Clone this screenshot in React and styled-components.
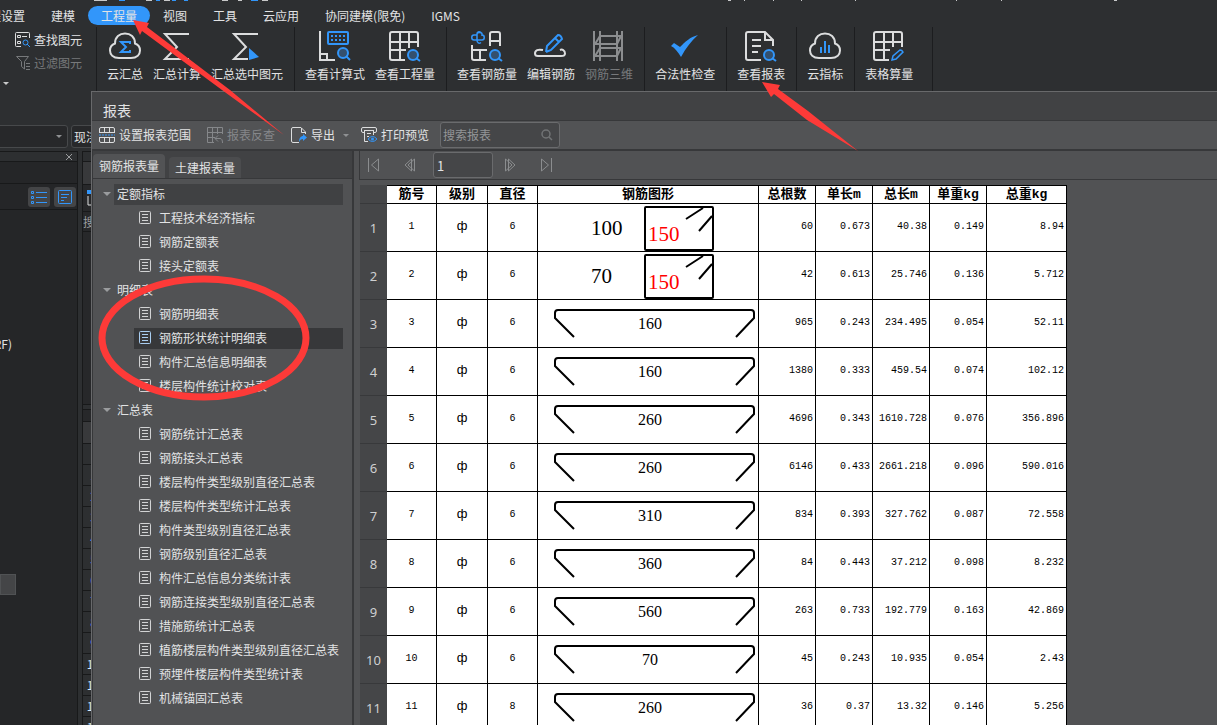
import React from "react";
import styled, { createGlobalStyle, css } from "styled-components";

const UI_FONT = '"Noto Sans CJK SC", "Noto Sans", sans-serif';
const LINE = "#18191a";
const BLUE = "#3296fa";
const RED = "#fd3a38";

const GlobalStyle = createGlobalStyle`
  *, *::before, *::after { box-sizing: border-box; }
  body { margin: 0; background: #2d2f31; }
  button, input { font: inherit; color: inherit; }
  button { background: none; border: 0; padding: 0; }
`;

const Page = styled.div`
  position: relative;
  display: flex;
  flex-direction: column;
  height: 100vh;
  overflow: hidden;
  background: #2d2f31;
  color: #e2e3e4;
  font-family: ${UI_FONT};
  font-size: 12px;
  line-height: 18px;
  white-space: nowrap;
`;

const QuickStrip = styled.div`
  height: 6px;
  flex: none;
  svg { display: block; }
`;

const MenuBar = styled.nav`
  display: flex;
  flex: none;
  height: 21px;
  margin-left: -36px;
`;

const MenuItem = styled.button`
  height: 19px;
  padding: 0 13px;
  border-radius: 10px;
  line-height: 18px;
  background: ${(p) => (p.$active ? BLUE : "transparent")};
`;

const Ribbon = styled.div`
  display: flex;
  flex: none;
  height: 64px;
`;

const RibbonGroup = styled.div`
  display: flex;
  gap: 10px;
  padding: 0 ${(p) => (p.$wide ? 19 : 11)}px 0 10px;
  border-right: 1px solid #1c1d1f;
`;

const RibbonButton = styled.button`
  display: flex;
  flex-direction: column;
  align-items: center;
  gap: 3px;
  padding-top: 3px;
  line-height: 18px;
  color: ${(p) => (p.disabled ? "#77797b" : "#e2e3e4")};
  svg { display: block; margin-right: 2px; overflow: visible; }
`;

const FindGroup = styled.div`
  display: flex;
  flex-direction: column;
  width: 97px;
  padding: 3px 0 0 15px;
  gap: 4px;
  border-right: 1px solid #1c1d1f;
`;

const FindButton = styled.button`
  display: flex;
  align-items: center;
  gap: 3px;
  height: 19px;
  color: ${(p) => (p.disabled ? "#77797b" : "#e2e3e4")};
`;

const MoreButton = styled.button`
  display: flex;
  align-items: center;
  height: 14px;
  margin-left: -12px;
`;

const Caret = styled.span`
  flex: none;
  width: 0;
  height: 0;
  border: ${(p) => p.$size || 3}px solid transparent;
  border-bottom: 0;
  border-top-color: ${(p) => p.$color || "#8f9193"};
`;

const Workspace = styled.div`
  display: flex;
  flex: 1;
  min-height: 0;
`;

const Backdrop = styled.div`
  display: flex;
  flex-direction: column;
  flex: none;
  width: 91px;
  overflow: hidden;
`;

const SelectorRow = styled.div`
  display: flex;
  flex: none;
  gap: 3px;
  height: 60px;
  padding-top: 34px;
`;

const Selector = styled.button`
  display: flex;
  flex: none;
  align-items: center;
  justify-content: ${(p) => (p.$end ? "flex-end" : "flex-start")};
  width: ${(p) => (p.$end ? 74 : 60)}px;
  height: 23px;
  margin-left: ${(p) => (p.$end ? -6 : 0)}px;
  padding: 0 5px 0 2px;
  background: #27282a;
  border: 1px solid #47494b;
  border-radius: 3px;
`;

const BackPanels = styled.div`
  display: flex;
  flex: 1;
  gap: 4px;
`;

const LeftPane = styled.div`
  display: flex;
  flex-direction: column;
  width: 78px;
  flex: none;
  background: #252628;
  border: solid ${LINE};
  border-width: 1px 1px 0 0;
`;

const PaneTitle = styled.div`
  display: flex;
  justify-content: flex-end;
  align-items: center;
  height: 10px;
  padding-right: 3px;
  background: #2d2f31;
  border-bottom: 1px solid ${LINE};
`;

const PaneTools = styled.div`
  display: flex;
  justify-content: flex-end;
  align-items: center;
  gap: 4px;
  height: 27px;
  margin-top: 21px;
  padding-right: 1px;
  border: solid ${LINE};
  border-width: 1px 0;
`;

const PaneButton = styled.button`
  display: grid;
  place-items: center;
  width: 22px;
  height: 20px;
  border-radius: 3px;
  background: #444547;
`;

const FloorNode = styled.div`
  display: flex;
  justify-content: flex-end;
  width: 12px;
  margin-top: 125px;
`;

const GrayBlock = styled.div`
  width: 16px;
  height: 21px;
  margin-top: 221px;
  background: #444547;
  border: 1px solid #505254;
`;

const RightPane = styled.div`
  flex: none;
  width: 22px;
  background: #252628;
  border: solid ${LINE};
  border-width: 1px 0 0 1px;
`;

const StripCell = styled.div`
  display: flex;
  align-items: center;
  justify-content: ${(p) => p.$align || "center"};
  height: ${(p) => p.$h}px;
  background: ${(p) => p.$bg || "#27282a"};
  border-bottom: 1px solid ${LINE};
  color: ${(p) => p.$color || "#9a9c9e"};
  overflow: hidden;
`;

const Dialog = styled.section`
  display: flex;
  flex-direction: column;
  flex: 1;
  min-width: 0;
  border: solid #68696b;
  border-width: 1px 0 0 1px;
  background: #515254;
`;

const DialogTitle = styled.h1`
  flex: none;
  height: 29px;
  margin: 0;
  padding: 8px 0 0 11px;
  font-size: 14px;
  font-weight: 400;
  line-height: 21px;
  background: #414244;
  border-bottom: 1px solid #37383a;
`;

const Toolbar = styled.div`
  display: flex;
  flex: none;
  align-items: center;
  height: 30px;
  padding-left: 7px;
  background: #525355;
  border-bottom: 2px solid #37383a;
`;

const ToolButton = styled.button`
  display: flex;
  align-items: center;
  gap: 4px;
  margin-right: ${(p) => p.$after || 0}px;
  color: ${(p) => (p.disabled ? "#85878a" : "#e2e3e4")};
`;

const SearchBox = styled.label`
  display: flex;
  align-items: center;
  width: 120px;
  height: 26px;
  padding: 0 6px 0 2px;
  background: #454648;
  border: 1px solid #6a6b6d;
  border-radius: 3px;
`;

const SearchInput = styled.input`
  flex: 1;
  min-width: 0;
  padding: 0;
  border: 0;
  outline: 0;
  background: none;
  &::placeholder { color: #939597; opacity: 1; }
`;

const DialogBody = styled.div`
  display: flex;
  flex: 1;
  min-height: 0;
`;

const Sidebar = styled.aside`
  display: flex;
  flex-direction: column;
  flex: none;
  width: 262px;
  border: solid #37383a;
  border-width: 0 2px 0 1px;
`;

const TabBar = styled.div`
  display: flex;
  flex: none;
  align-items: flex-end;
  gap: 4px;
  height: 28px;
  background: #414244;
  border-bottom: 1px solid #37383a;
`;

const Tab = styled.button`
  width: 72px;
  height: ${(p) => (p.$active ? 24 : 21)}px;
  border-radius: 4px 4px 0 0;
  background: ${(p) => (p.$active ? "#525355" : "#4b4c4e")};
`;

const Tree = styled.ul`
  flex: 1;
  margin: 0;
  padding: 3px 9px 0 10px;
  list-style: none;
  overflow: hidden;
`;

const TreeRow = styled.li`
  display: flex;
  align-items: center;
  height: 24px;
  padding-left: ${(p) => (p.$leaf ? 31 : 0)}px;
`;

const TreeLabel = styled.span`
  display: flex;
  flex: 1;
  align-items: center;
  gap: 8px;
  height: 21px;
  margin-left: ${(p) => (p.$leaf ? 0 : 3)}px;
  padding-left: ${(p) => (p.$leaf ? 5 : 3)}px;
  ${(p) => p.$bg && css`background: ${p.$bg};`}
  svg { flex: none; }
`;

const Report = styled.main`
  flex: 1;
  min-width: 0;
  margin-left: 5px;
  overflow: hidden;
`;

const Pager = styled.div`
  display: flex;
  align-items: center;
  height: 29px;
  padding-left: 8px;
  border: solid #37383a;
  border-width: 0 0 1px 1px;
`;

const PagerButton = styled.button`
  display: flex;
  margin-right: ${(p) => p.$after || 0}px;
`;

const PageInput = styled.input`
  width: 60px;
  height: 26px;
  margin-right: 11px;
  padding: 0 3px;
  font-size: 13px;
  background: #454648;
  border: 1px solid #6a6b6d;
  border-radius: 3px;
`;

const Sheet = styled.table`
  width: 707px;
  margin: 5px 0 0 1px;
  table-layout: fixed;
  border-collapse: separate;
  border-spacing: 0;
  color: #000;
`;

const HeadCell = styled.th`
  height: 19px;
  padding: 0;
  font: 700 13px/16px "Liberation Mono", "Noto Sans CJK SC", monospace;
  background: #fff;
  border: solid #000;
  border-width: 1px 1px 1px 0;
`;

const RowHead = styled.th`
  padding: 0;
  font: 400 13px/18px "Noto Sans", sans-serif;
  color: #cfd0d1;
  background: #454648;
  border-bottom: 1px solid #38393b;
`;

const Cell = styled.td`
  height: 48px;
  padding: 0 ${(p) => (p.$num ? 2 : 0)}px ${(p) => (p.$draw ? 0 : 2)}px 0;
  font: 10px/16px "Liberation Mono", monospace;
  text-align: ${(p) => (p.$num ? "right" : "center")};
  background: #fff;
  border: solid #000;
  border-width: 0 1px 1px 0;
  svg { display: block; }
`;

const Grade = styled.span`
  font: 13px/16px "Liberation Sans", sans-serif;
`;

const Markup = styled.svg`
  position: absolute;
  top: 0;
  left: 0;
  pointer-events: none;
`;

const W = { fill: "none", stroke: "#dcddde", strokeWidth: 2 };
const B = { fill: "none", stroke: BLUE, strokeWidth: 2 };

const Icon = ({ w = 32, h = 32, children }) => (
  <svg width={w} height={h} viewBox={`0 0 ${w} ${h}`} aria-hidden="true">{children}</svg>
);

const CLOUD = "M11 28C5 28 2 24.500 2 20.500C2 17 4 14.500 7 13.500C7 7 11.500 3.500 17 3.500C22.500 3.500 27 7 27 13.500C30 14.500 32 17 32 20.500C32 24.500 29 28 23 28Z";

const ribbonIcons = {
  cloudSum: (
    <Icon><path d={CLOUD} {...W} /><path d="M22 14V12H13L18 17L13 22H22V20" {...B} /></Icon>
  ),
  sum: <Icon><path d="M29 4H5L17 17L5 29H29" {...W} /></Icon>,
  sumPick: (
    <Icon><path d="M28 4H4L16 17L4 29H18" {...W} /><path d="M19 18L29 27L19 30Z" fill={BLUE} /></Icon>
  ),
  formula: (
    <Icon>
      <path d="M2 1V30H17M3 24H9V30" {...W} />
      <rect x="10" y="2" width="20" height="12" rx="1" {...B} />
      <path d="M13 6H28M13 10H28" {...B} strokeDasharray="2 2" />
      <circle cx="25" cy="23" r="5" {...B} fill="#34506e" /><path d="M28 26L32 30" {...B} />
    </Icon>
  ),
  quantity: (
    <Icon>
      <path d="M17 30H4Q2 30 2 28V4Q2 2 4 2H28Q30 2 30 4V17M2 12H30M2 20H18M12 2V30M21 2V18" {...W} />
      <circle cx="25" cy="25" r="5" {...B} fill="#34506e" /><path d="M28 28L32 31" {...B} />
    </Icon>
  ),
  rebar: (
    <Icon>
      <path d="M20 16V4Q20 2 22 2H28Q30 2 30 4V16M20 11H30M16 30H4Q2 30 2 28V15M2 20H17M10 20V30" {...W} />
      <path d="M11 2.500C9 1 7 2 7 4V10C7 13 9 14 11 12.500M7 4C7 2 12 2 12 4V6M7 5H4C1 5 1 10 4 10H12C15 10 15 5 12 5" {...B} strokeWidth="1.500" />
      <circle cx="25" cy="25" r="5" {...B} fill="#34506e" /><path d="M28 28L32 31" {...B} />
    </Icon>
  ),
  editRebar: (
    <Icon>
      <path d="M9 20C4 19 1 20 1 23.500Q1 26 4 26H27Q31 26 31 23.500C31 20 28 19 26 20" {...W} />
      <path d="M12 22L13 16L24 5Q27 5 28 9L17 20L12 22M21 8L25 12" {...B} />
    </Icon>
  ),
  rebar3d: (
    <Icon>
      <g fill="none" stroke="#8b8d8f" strokeWidth="2">
        <path d="M2 1V31M8 1V31M25 1V31M30 1V31M8 6H29M2 14H25M8 6L3 14M29 6L25 14M8 18H29M2 26H25M8 18L3 26M29 18L25 26" />
      </g>
    </Icon>
  ),
  check: <Icon><path d="M3 16L6 13L12 17C17 12 22 7 30 5C23 11 18 18 13 27C10 22 7 18 3 16Z" fill={BLUE} /></Icon>,
  report: (
    <Icon>
      <path d="M17 30H4Q2 30 2 28V4Q2 2 4 2H21L29 10V16M21 2V10H29M8 10H17M8 16H17M8 22H14" {...W} />
      <circle cx="25" cy="25" r="5" {...B} fill="#34506e" /><path d="M28 28L32 31" {...B} />
    </Icon>
  ),
  cloudIndex: (
    <Icon><path d={CLOUD} {...W} /><path d="M13 17V23M17 11V23M21 15V23" {...B} /></Icon>
  ),
  sheet: (
    <Icon>
      <path d="M17 30H4Q2 30 2 28V4Q2 2 4 2H28Q30 2 30 4V17M2 12H30M2 20H18M12 2V30M21 2V17" {...W} />
      <path d="M20 30L21 26L28 20Q30 20 31 22L24 29Z" {...B} strokeWidth="1.500" />
    </Icon>
  ),
};

const RIBBON = [
  [["云汇总", "cloudSum"], ["汇总计算", "sum"], ["汇总选中图元", "sumPick"]],
  [["查看计算式", "formula"], ["查看工程量", "quantity"]],
  [["查看钢筋量", "rebar"], ["编辑钢筋", "editRebar"], ["钢筋三维", "rebar3d", true]],
  [["合法性检查", "check"]],
  [["查看报表", "report"]],
  [["云指标", "cloudIndex"]],
  [["表格算量", "sheet"]],
];

const MENU = ["工程设置", "建模", "工程量", "视图", "工具", "云应用", "协同建模(限免)", "IGMS"];

const TREE = [
  ["定额指标", ["工程技术经济指标", "钢筋定额表", "接头定额表"]],
  ["明细表", ["钢筋明细表", "钢筋形状统计明细表", "构件汇总信息明细表", "楼层构件统计校对表"]],
  ["汇总表", [
    "钢筋统计汇总表", "钢筋接头汇总表", "楼层构件类型级别直径汇总表", "楼层构件类型统计汇总表",
    "构件类型级别直径汇总表", "钢筋级别直径汇总表", "构件汇总信息分类统计表", "钢筋连接类型级别直径汇总表",
    "措施筋统计汇总表", "植筋楼层构件类型级别直径汇总表", "预埋件楼层构件类型统计表", "机械锚固汇总表",
  ]],
];

const HEADS = ["筋号", "级别", "直径", "钢筋图形", "总根数", "单长m", "总长m", "单重kg", "总重kg"];
const COLS = [27, 50, 51, 50, 221, 57, 57, 57, 57, 80];

const ROWS = [
  ["6", "100", "60", "0.673", "40.38", "0.149", "8.94"],
  ["6", "70", "42", "0.613", "25.746", "0.136", "5.712"],
  ["6", "160", "965", "0.243", "234.495", "0.054", "52.11"],
  ["6", "160", "1380", "0.333", "459.54", "0.074", "102.12"],
  ["6", "260", "4696", "0.343", "1610.728", "0.076", "356.896"],
  ["6", "260", "6146", "0.433", "2661.218", "0.096", "590.016"],
  ["6", "310", "834", "0.393", "327.762", "0.087", "72.558"],
  ["6", "360", "84", "0.443", "37.212", "0.098", "8.232"],
  ["6", "560", "263", "0.733", "192.779", "0.163", "42.869"],
  ["6", "70", "45", "0.243", "10.935", "0.054", "2.43"],
  ["8", "260", "36", "0.37", "13.32", "0.146", "5.256"],
];

const DocIcon = ({ tint }) => (
  <Icon w={12} h={14}>
    <g fill="none" stroke={tint ? "#a9cdf0" : "#d2d3d4"}>
      <rect x="0.500" y="0.500" width="11" height="12" rx="1" />
      <path d="M3 3.500H9M3 6.500H9M3 9.500H9" />
    </g>
  </Icon>
);

const StirrupShape = ({ size }) => (
  <svg width="220" height="47" viewBox="0 0 220 47">
    <rect x="107" y="3" width="68" height="43" rx="1" fill="none" stroke="#000" strokeWidth="2" />
    <path d="M148 15L165 4M161 27L174 12" stroke="#000" strokeWidth="2" />
    <text x="53" y="31" fontFamily="Liberation Serif, serif" fontSize="21">{size}</text>
    <text x="110" y="37" fontFamily="Liberation Serif, serif" fontSize="21" fill="#f00">150</text>
  </svg>
);

const HookShape = ({ size }) => (
  <svg width="220" height="47" viewBox="0 0 220 47">
    <path d="M36 37L17 18V13Q17 10 20 10H213Q216 10 216 13V18L198 37" fill="none" stroke="#000" strokeWidth="2" />
    <text x="112" y="29" textAnchor="middle" fontFamily="Liberation Serif, serif" fontSize="16">{size}</text>
  </svg>
);

const Magnifier = ({ size = 12, color = "#717375" }) => (
  <Icon w={size} h={size}>
    <g fill="none" stroke={color} strokeWidth="1.500"><circle cx="5" cy="5" r="4" /><path d="M8 8L11 11" /></g>
  </Icon>
);

const PagerIcon = ({ d }) => (
  <Icon w={12} h={14}><path d={d} fill="none" stroke="#8b8d8f" /></Icon>
);

function Backstage() {
  return (
    <Backdrop>
      <SelectorRow>
        <Selector $end aria-label="楼层"><Caret /></Selector>
        <Selector>现浇板</Selector>
      </SelectorRow>
      <BackPanels>
        <LeftPane>
          <PaneTitle><Icon w={10} h={10}><path d="M2 2L8 8M8 2L2 8" stroke="#9a9c9e" /></Icon></PaneTitle>
          <PaneTools>
            <PaneButton aria-label="列表">
              <Icon w={18} h={16}><g fill="none" stroke={BLUE}><path d="M6 3.500H17M6 8.500H17M6 13.500H17" /><path d="M1.500 2.500H3.500V4.500H1.500ZM1.500 7.500H3.500V9.500H1.500ZM1.500 12.500H3.500V14.500H1.500Z" /></g></Icon>
            </PaneButton>
            <PaneButton aria-label="详情">
              <Icon w={16} h={16}><g fill="none" stroke={BLUE}><rect x="1.500" y="1.500" width="13" height="13" rx="1" /><path d="M4 5.500H12M4 8.500H10M4 11.500H7" /></g></Icon>
            </PaneButton>
          </PaneTools>
          <FloorNode>(RF)</FloorNode>
          <GrayBlock />
        </LeftPane>
        <RightPane>
          <StripCell $h={10} $bg="#2d2f31" />
          <StripCell $h={23} $bg="#38393b" />
          <StripCell $h={27} $align="flex-start">
            <Icon w={20} h={22}><path d="M4 3H8V7H4Z" fill={BLUE} /><path d="M5 9V18H12" {...W} strokeWidth="1" /></Icon>
          </StripCell>
          <StripCell $h={20} $align="flex-start">搜索</StripCell>
          <StripCell $h={173} />
          <StripCell $h={5} $bg="#2d2f31" />
          <StripCell $h={12} />
          <StripCell $h={22} $bg="#38393b" />
          <StripCell $h={21} $bg="#2d2f31" />
          {Array.from({ length: 13 }, (_, i) => (
            <StripCell key={i} $h={21} $bg="#2d2f31" $color={i < 9 ? BLUE : "#d5e8fa"}>{i + 1}</StripCell>
          ))}
        </RightPane>
      </BackPanels>
    </Backdrop>
  );
}

function ReportSheet() {
  return (
    <Sheet>
      <colgroup>{COLS.map((w, i) => <col key={i} width={w} />)}</colgroup>
      <thead>
        <tr>
          <RowHead aria-label="行" />
          {HEADS.map((h) => <HeadCell key={h} scope="col">{h}</HeadCell>)}
        </tr>
      </thead>
      <tbody>
        {ROWS.map(([dia, size, ...nums], i) => (
          <tr key={i}>
            <RowHead scope="row">{i + 1}</RowHead>
            <Cell>{i + 1}</Cell>
            <Cell><Grade>ф</Grade></Cell>
            <Cell>{dia}</Cell>
            <Cell $draw>{i < 2 ? <StirrupShape size={size} /> : <HookShape size={size} />}</Cell>
            {nums.map((n, j) => <Cell $num key={j}>{n}</Cell>)}
          </tr>
        ))}
      </tbody>
    </Sheet>
  );
}

export default function App() {
  return (
    <Page>
      <GlobalStyle />
      <QuickStrip>
        <Icon w={1120} h={4}>
          <path d="M94 0H107M146 0H152M164 0H170M222 0H228M238 0H242M262 0H268" stroke="#c8c9ca" strokeWidth="2" />
          <path d="M119 0H125M156 0H160M172 0H176M184 0H188M251 0H258" stroke={BLUE} strokeWidth="2" />
          <path d="M728 0H731M744 0H745M773 0H774M801 0H802M855 0H856M956 0H957M1001 0H1002M1114 0H1117" stroke="#c8c9ca" strokeWidth="2" />
        </Icon>
      </QuickStrip>
      <MenuBar>
        {MENU.map((m) => <MenuItem key={m} $active={m === "工程量"}>{m}</MenuItem>)}
      </MenuBar>
      <Ribbon>
        <FindGroup>
          <FindButton>
            <Icon w={16} h={16}>
              <path d="M6 14.500H1.500Q0.500 14.500 0.500 13.500V1.500Q0.500 0.500 1.500 0.500H13.500Q14.500 0.500 14.500 1.500V6M2.500 3.500H5.500V5.500H2.500ZM7 4.500H12M2.500 9.500H5.500V11.500H2.500Z" {...W} strokeWidth="1" />
              <circle cx="10.500" cy="10.500" r="2.500" {...B} strokeWidth="1" /><path d="M12 12L15 15" {...B} strokeWidth="1" />
            </Icon>
            查找图元
          </FindButton>
          <FindButton disabled>
            <Icon w={16} h={16}>
              <path d="M1.500 1.500H13.500L9.500 6.500V14L6.500 11.500V6.500ZM11 8.500H15M11 11.500H15M11 14.500H15" fill="none" stroke="#77797b" />
            </Icon>
            过滤图元
          </FindButton>
          <MoreButton aria-label="更多"><Caret $color="#c8c9ca" /></MoreButton>
        </FindGroup>
        {RIBBON.map((group, g) => (
          <RibbonGroup key={g} $wide={g === RIBBON.length - 1}>
            {group.map(([label, icon, off]) => (
              <RibbonButton key={label} disabled={off}>{ribbonIcons[icon]}{label}</RibbonButton>
            ))}
          </RibbonGroup>
        ))}
      </Ribbon>
      <Workspace>
        <Backstage />
        <Dialog>
          <DialogTitle>报表</DialogTitle>
          <Toolbar>
            <ToolButton $after={16}>
              <Icon w={16} h={16}>
                <path d="M0.500 5V2Q0.500 0.500 2 0.500H14Q15.500 0.500 15.500 2V5M5.500 0V5M10.500 0V5M0.500 11V14Q0.500 15.500 2 15.500H14Q15.500 15.500 15.500 14V11M5.500 11V16M10.500 11V16M0 5.500H16M0 10.500H16" {...W} strokeWidth="1" />
                <path d="M0 8H16" {...B} strokeWidth="1" strokeDasharray="2 1" />
              </Icon>
              设置报表范围
            </ToolButton>
            <ToolButton disabled $after={16}>
              <Icon w={16} h={16}>
                <path d="M7 15.500H0.500V0.500H15.500V7M0 5.500H16M0 10.500H8M5.500 0V16M10.500 0V7M8 11.500H13Q15.500 11.500 15.500 16M11 8.500L8 11.500L11 14.500" fill="none" stroke="#85878a" />
              </Icon>
              报表反查
            </ToolButton>
            <ToolButton $after={12}>
              <Icon w={16} h={16}>
                <path d="M8 15.500H2Q0.500 15.500 0.500 14V2Q0.500 0.500 2 0.500H10L14.500 5V7M10.500 1V5.500H14" {...W} strokeWidth="1" />
                <path d="M8 15C8 11 10 9 12 9V7L16 10.500L12 14V12C10 12 9 13 8 15Z" fill={BLUE} />
              </Icon>
              导出
              <span /><Caret />
            </ToolButton>
            <ToolButton $after={11}>
              <Icon w={16} h={16}>
                <path d="M3 5.500H2Q0.500 5.500 0.500 4V2Q0.500 0.500 2 0.500H14Q15.500 0.500 15.500 2V4Q15.500 5.500 14 5.500H13M3 3.500H13M3.500 3.500V14.500H7M12.500 3.500V8M6 6.500H10M6 9.500H8" {...W} strokeWidth="1" />
                <path d="M7 12Q11.500 7 16 12Q11.500 17 7 12Z" fill="none" stroke={BLUE} /><circle cx="11.500" cy="12" r="1.500" fill={BLUE} />
              </Icon>
              打印预览
            </ToolButton>
            <SearchBox>
              <SearchInput placeholder="搜索报表" aria-label="搜索报表" />
              <Magnifier />
            </SearchBox>
          </Toolbar>
          <DialogBody>
            <Sidebar>
              <TabBar>
                <Tab $active>钢筋报表量</Tab>
                <Tab>土建报表量</Tab>
              </TabBar>
              <Tree>
                {TREE.map(([name, items], g) => (
                  <React.Fragment key={name}>
                    <TreeRow>
                      <Caret $size={4} $color="#9a9c9e" />
                      <TreeLabel $bg={g === 0 && "#404143"}>{name}</TreeLabel>
                    </TreeRow>
                    {items.map((item) => {
                      const selected = item === "钢筋形状统计明细表";
                      return (
                        <TreeRow key={item} $leaf>
                          <TreeLabel $leaf $bg={selected && "#37383a"}><DocIcon tint={selected} />{item}</TreeLabel>
                        </TreeRow>
                      );
                    })}
                  </React.Fragment>
                ))}
              </Tree>
            </Sidebar>
            <Report>
              <Pager>
                <PagerButton $after={24} aria-label="首页"><PagerIcon d="M0.500 0V14M10.500 1L3.500 7L10.500 13Z" /></PagerButton>
                <PagerButton $after={17} aria-label="上一页"><PagerIcon d="M7.500 1L1 7L7.500 13ZM10.500 1V13M10.500 1L4 7L10.500 13" /></PagerButton>
                <PageInput defaultValue="1" aria-label="页码" />
                <PagerButton $after={24} aria-label="下一页"><PagerIcon d="M4.500 1L11 7L4.500 13ZM1.500 1V13M1.500 1L8 7L1.500 13" /></PagerButton>
                <PagerButton aria-label="末页"><PagerIcon d="M11.500 0V14M1.500 1L8.500 7L1.500 13Z" /></PagerButton>
              </Pager>
              <ReportSheet />
            </Report>
          </DialogBody>
        </Dialog>
      </Workspace>
      <Markup width="900" height="420" viewBox="0 0 900 420" aria-hidden="true">
        <path d="M133 20L149 23L147 27L230 90L284 135L222 90L142 31L140 35Z" fill={RED} />
        <path d="M762 82L780 85L778 89L808 111L858 151L807 120L774 94L771 97Z" fill={RED} />
        <ellipse cx="204" cy="338" rx="102" ry="59" fill="none" stroke={RED} strokeWidth="7" />
      </Markup>
    </Page>
  );
}
